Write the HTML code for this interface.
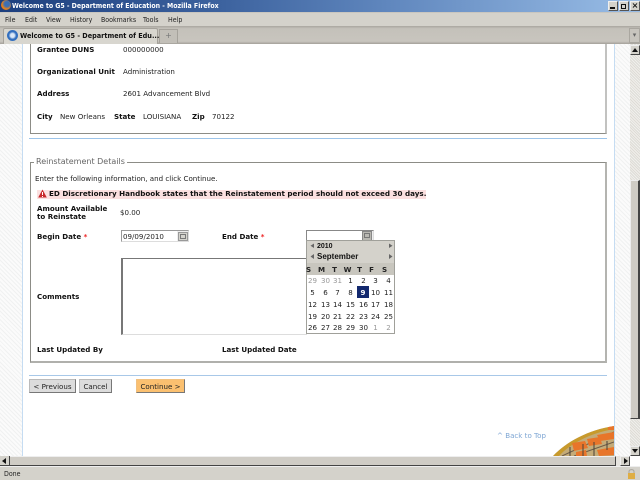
<!DOCTYPE html>
<html><head><meta charset="utf-8"><style>
html,body{margin:0;padding:0;width:640px;height:480px;overflow:hidden;background:#fff}
body{position:relative;font-family:"DejaVu Sans","Liberation Sans",sans-serif;font-size:7.1px;color:#222}
div,span.a{position:absolute;white-space:nowrap;box-sizing:border-box}
.t{line-height:10px;height:10px}
.b{font-weight:bold;color:#111}
.m{font-family:"DejaVu Sans",sans-serif;font-size:7.4px;color:#222;line-height:12px;top:14px;transform:scaleX(.85);transform-origin:0 0}
.r{color:#e22}
.cal{font-size:7.1px;line-height:13px;height:13px;width:13px;text-align:center;color:#222}
.g{color:#999}
.pat{background-color:#f7f7f6;background-image:repeating-linear-gradient(45deg,#f0f1f1 0 1px,#fbfbfb 1px 3px)}
</style></head><body>
<!-- title bar -->
<div style="left:0;top:0;width:640px;height:12px;background:linear-gradient(90deg,#1d3f7e 0,#3d639f 35%,#5f86bd 60%,#99bde6 100%)"></div>
<div style="left:0;top:12px;width:640px;height:14px;background:#d4d2cb"></div>
<div style="left:0;top:12px;width:640px;height:1px;background:#c9c6bf"></div>
<div style="left:1px;top:0;width:10px;height:10px;border-radius:50%;background:radial-gradient(circle at 60% 40%,#3b6fb5 0 30%,#e8841c 60%,#c4500f)"></div>
<div style="left:12px;top:0;height:12px;line-height:11px;font-family:'DejaVu Sans',sans-serif;font-size:7.4px;font-weight:bold;color:#fff;transform:scaleX(.843);transform-origin:0 0">Welcome to G5 - Department of Education - Mozilla Firefox</div>
<div style="left:608px;top:1px;width:10px;height:10px;background:#d4d2cb;border:1px solid #999;border-color:#eee #555 #555 #eee"></div>
<div style="left:610px;top:7px;width:5px;height:2px;background:#111"></div>
<div style="left:619px;top:1px;width:10px;height:10px;background:#d4d2cb;border:1px solid #999;border-color:#eee #555 #555 #eee"></div>
<div style="left:621px;top:4px;width:5px;height:5px;border:1px solid #111"></div>
<div style="left:630px;top:1px;width:10px;height:10px;background:#d4d2cb;border:1px solid #999;border-color:#eee #555 #555 #eee;font-size:8px;line-height:8px;text-align:center;font-weight:bold;color:#111">×</div>
<!-- menu -->
<div class="m" style="left:5px">File</div><div class="m" style="left:25px">Edit</div><div class="m" style="left:46px">View</div><div class="m" style="left:70px">History</div><div class="m" style="left:101px">Bookmarks</div><div class="m" style="left:143px">Tools</div><div class="m" style="left:168px">Help</div>
<!-- tab bar -->
<div style="left:0;top:26px;width:640px;height:18px;background:linear-gradient(#a9a69f,#c4c1ba 15%,#c8c5be 85%,#a3a09a)"></div>
<div style="left:3px;top:28px;width:155px;height:16px;background:#d8d6cf;border:1px solid #a5a29b;border-bottom:0;border-radius:2px 2px 0 0"></div>
<div style="left:7px;top:30px;width:11px;height:11px;border-radius:50%;background:radial-gradient(circle,#dbe8f8 0 25%,#2f6cbd 50%,#3d78c7)"></div>
<div style="left:20px;top:30px;height:12px;line-height:12px;font-family:'DejaVu Sans',sans-serif;font-size:7.4px;color:#111;font-weight:bold;transform:scaleX(.88);transform-origin:0 0">Welcome to G5 - Department of Edu...</div>
<div style="left:159px;top:29px;width:19px;height:14px;background:#c2bfb8;border:1px solid #a5a29b;border-bottom:0;color:#777;text-align:center;line-height:12px;font-size:8px">+</div>
<div style="left:629px;top:28px;width:11px;height:15px;background:#c8c5be;border:1px solid #aaa7a0;color:#666;font-size:7px;line-height:13px;text-align:center">▾</div>
<!-- content backgrounds -->
<div class="pat" style="left:0;top:44px;width:22px;height:412px"></div>
<div style="left:22px;top:44px;width:1px;height:412px;background:#c5dcf2"></div>
<div style="left:614px;top:44px;width:1px;height:412px;background:#c5dcf2"></div>
<div class="pat" style="left:615px;top:44px;width:15px;height:412px"></div>
<!-- panel 1 -->
<div style="left:30px;top:44px;width:577px;height:90px;border:1px solid #8c8c86;border-top:0;border-right:2px solid #c2c2c0;border-left-width:1px"></div>
<div class="t b" style="left:37px;top:45px">Grantee DUNS</div><div class="t" style="left:123px;top:45px">000000000</div>
<div class="t b" style="left:37px;top:67px">Organizational Unit</div><div class="t" style="left:123px;top:67px">Administration</div>
<div class="t b" style="left:37px;top:89px">Address</div><div class="t" style="left:123px;top:89px">2601 Advancement Blvd</div>
<div class="t b" style="left:37px;top:112px">City</div><div class="t" style="left:60px;top:112px">New Orleans</div><div class="t b" style="left:114px;top:112px">State</div><div class="t" style="left:143px;top:112px">LOUISIANA</div><div class="t b" style="left:192px;top:112px">Zip</div><div class="t" style="left:212px;top:112px">70122</div>
<div style="left:29px;top:138px;width:578px;height:1px;background:#9cc4ea"></div>
<!-- fieldset -->
<div style="left:30px;top:162px;width:577px;height:201px;border:1px solid #8c8c86;border-right:2px solid #b4b4b0;border-bottom:2px solid #b0b0ac"></div>
<div class="t" style="left:34px;top:157px;background:#fff;padding:0 2px;font-size:8px;color:#666">Reinstatement Details</div>
<div class="t" style="left:35px;top:174px">Enter the following information, and click Continue.</div>
<div style="left:37px;top:190px;width:389px;height:9px;background:#fbe0e0"></div>
<svg style="position:absolute;left:38px;top:189px" width="9" height="9" viewBox="0 0 9 9"><path d="M4.500 .5L8.800 8.500H.2Z" fill="#c8282a"/><path d="M4.500 3v3M4.500 7v1" stroke="#fff" stroke-width="1"/></svg>
<div class="t b" style="left:49px;top:189px;font-size:7.18px">ED Discretionary Handbook states that the Reinstatement period should not exceed 30 days.</div>
<div class="t b" style="left:37px;top:204px">Amount Available</div><div class="t b" style="left:37px;top:212px">to Reinstate</div>
<div class="t" style="left:120px;top:208px">$0.00</div>
<div class="t b" style="left:37px;top:232px">Begin Date <span class="r">*</span></div>
<div style="left:121px;top:230px;width:68px;height:12px;background:#eee;border:1px solid #999;border-right-color:#ddd;border-bottom-color:#ddd"></div>
<div style="left:122px;top:231px;width:55px;height:10px;background:#fff"></div>
<div class="t" style="left:123px;top:232px">09/09/2010</div>
<div style="left:178px;top:232px;width:10px;height:9px;background:#d4d3cd;border:1px solid #999"></div>
<div style="left:180px;top:234px;width:6px;height:5px;border:1px solid #777"></div>
<div class="t b" style="left:222px;top:232px">End Date <span class="r">*</span></div>
<div style="left:306px;top:230px;width:68px;height:12px;background:#eee;border:1px solid #888;border-right-color:#ddd;border-bottom:0"></div>
<div style="left:307px;top:231px;width:55px;height:10px;background:#fff"></div>
<div style="left:362px;top:231px;width:10px;height:10px;background:#b9b8b2;border:1px solid #888"></div>
<div style="left:364px;top:233px;width:6px;height:5px;border:1px solid #777"></div>
<!-- textarea -->
<div style="left:121px;top:258px;width:186px;height:77px;background:#fff;border-top:1px solid #777;border-left:2px solid #777;border-bottom:1px solid #ddd"></div>
<div class="t b" style="left:37px;top:292px">Comments</div>
<div class="t b" style="left:37px;top:345px">Last Updated By</div>
<div class="t b" style="left:222px;top:345px">Last Updated Date</div>
<!-- calendar -->
<div style="left:306px;top:240px;width:89px;height:94px;background:#fff;border:1px solid #a0a09a"></div>
<div style="left:307px;top:241px;width:87px;height:22px;background:#d4d2cb"></div>
<div style="left:307px;top:263px;width:87px;height:12px;background:#c8c6be"></div>
<div class="t b" style="left:317px;top:242px;font-family:'Liberation Sans',sans-serif;font-size:7px">2010</div>
<div class="t b" style="left:317px;top:252px;font-family:'Liberation Sans',sans-serif;font-size:8px">September</div>
<svg style="position:absolute;left:306px;top:242px" width="89" height="20"><path d="M8 1.500V6L4.500 3.800ZM8 12V17L4.500 14.500ZM83 1.500V6L86.500 3.800ZM83 12V17L86.500 14.500Z" fill="#666"/></svg>
<div class="cal b" style="left:302px;top:263px">S</div><div class="cal b" style="left:315px;top:263px">M</div><div class="cal b" style="left:328px;top:263px">T</div><div class="cal b" style="left:341px;top:263px">W</div><div class="cal b" style="left:353px;top:263px">T</div><div class="cal b" style="left:365px;top:263px">F</div><div class="cal b" style="left:378px;top:263px">S</div>
<div style="left:357px;top:286px;width:12px;height:12px;background:#12286e"></div>
<div class="cal g" style="left:306px;top:274px">29</div><div class="cal g" style="left:319px;top:274px">30</div><div class="cal g" style="left:331px;top:274px">31</div><div class="cal" style="left:344px;top:274px">1</div><div class="cal" style="left:357px;top:274px">2</div><div class="cal" style="left:369px;top:274px">3</div><div class="cal" style="left:382px;top:274px">4</div>
<div class="cal" style="left:306px;top:286px">5</div><div class="cal" style="left:319px;top:286px">6</div><div class="cal" style="left:331px;top:286px">7</div><div class="cal" style="left:344px;top:286px">8</div><div class="cal b" style="left:356.500px;top:286px;color:#fff">9</div><div class="cal" style="left:369px;top:286px">10</div><div class="cal" style="left:382px;top:286px">11</div>
<div class="cal" style="left:306px;top:298px">12</div><div class="cal" style="left:319px;top:298px">13</div><div class="cal" style="left:331px;top:298px">14</div><div class="cal" style="left:344px;top:298px">15</div><div class="cal" style="left:357px;top:298px">16</div><div class="cal" style="left:369px;top:298px">17</div><div class="cal" style="left:382px;top:298px">18</div>
<div class="cal" style="left:306px;top:310px">19</div><div class="cal" style="left:319px;top:310px">20</div><div class="cal" style="left:331px;top:310px">21</div><div class="cal" style="left:344px;top:310px">22</div><div class="cal" style="left:357px;top:310px">23</div><div class="cal" style="left:369px;top:310px">24</div><div class="cal" style="left:382px;top:310px">25</div>
<div class="cal" style="left:306px;top:321px">26</div><div class="cal" style="left:319px;top:321px">27</div><div class="cal" style="left:331px;top:321px">28</div><div class="cal" style="left:344px;top:321px">29</div><div class="cal" style="left:357px;top:321px">30</div><div class="cal g" style="left:369px;top:321px">1</div><div class="cal g" style="left:382px;top:321px">2</div>
<!-- buttons -->
<div style="left:29px;top:375px;width:578px;height:1px;background:#a8c8e8"></div>
<div class="t" style="left:29px;top:379px;width:47px;height:14px;line-height:13px;text-align:center;background:#dcdcdc;border:1px solid #bbb;border-right-color:#777;border-bottom-color:#777">&lt; Previous</div>
<div class="t" style="left:79px;top:379px;width:33px;height:14px;line-height:13px;text-align:center;background:#dcdcdc;border:1px solid #bbb;border-right-color:#777;border-bottom-color:#777">Cancel</div>
<div class="t" style="left:136px;top:379px;width:49px;height:14px;line-height:13px;text-align:center;background:#fbc070;border:1px solid #f0c080;border-right-color:#777;border-bottom-color:#777">Continue &gt;</div>
<!-- back to top -->
<div class="t" style="left:497px;top:431px;color:#7ea6d4">^ Back to Top</div>
<!-- corner image -->
<svg style="position:absolute;left:550px;top:422px" width="64" height="34" viewBox="0 0 64 34"><defs><clipPath id="c"><path d="M3 34C16 20 38 8 64 4V34Z"/></clipPath></defs><g clip-path="url(#c)"><rect width="64" height="34" fill="#c4ab78"/><path d="M3 34C16 20 38 8 64 4V7C40 11 20 22 9 34Z" fill="#c89a2c"/><path d="M12 34L64 10M24 34L64 20" stroke="#6a5a48" stroke-width="1" fill="none"/><path d="M22 21L35 19 38 26 24 29ZM37 17L50 15 52 22 39 24ZM47 13L64 10V17L50 19ZM47 28L64 25V33L49 34ZM26 30L36 28 37 34H26ZM58 4L64 4V8L58 8Z" fill="#e8752a"/><path d="M20 25V34M33 22V34M44 20V34M57 19V28" stroke="#4a4238" stroke-width="1" fill="none"/></g></svg>
<!-- v scrollbar -->
<div style="left:630px;top:44px;width:10px;height:412px;background-color:#e8e6e1;background-image:repeating-linear-gradient(45deg,#dedcd6 0 1px,#f0efec 1px 2px)"></div>
<div style="left:630px;top:45px;width:10px;height:10px;background:#d4d2cb;border:1px solid #eee;border-right-color:#444;border-bottom-color:#444"></div>
<svg style="position:absolute;left:631px;top:47px" width="8" height="6"><path d="M4 1L7 5H1Z" fill="#111"/></svg>
<div style="left:630px;top:180px;width:10px;height:239px;background:#cfccc5;border:1px solid #eee;border-right:2px solid #444;border-bottom:1px solid #444"></div>
<div style="left:630px;top:446px;width:10px;height:10px;background:#d4d2cb;border:1px solid #eee;border-right-color:#444;border-bottom-color:#444"></div>
<svg style="position:absolute;left:631px;top:448px" width="8" height="6"><path d="M1 1H7L4 5Z" fill="#111"/></svg>
<!-- h scrollbar -->
<div style="left:0;top:456px;width:630px;height:10px;background:#e6e4df"></div>
<div style="left:10px;top:456px;width:606px;height:10px;background:#cfccc5;border-top:1px solid #eee;border-bottom:1px solid #444;border-right:1px solid #444"></div>
<div style="left:0;top:456px;width:10px;height:10px;background:#d4d2cb;border-right:1px solid #444;border-bottom:1px solid #444"></div>
<svg style="position:absolute;left:1px;top:458px" width="7" height="7"><path d="M5 0V6L1 3Z" fill="#111"/></svg>
<div style="left:620px;top:456px;width:10px;height:10px;background:#d4d2cb;border:1px solid #eee;border-right-color:#444;border-bottom-color:#444"></div>
<svg style="position:absolute;left:622px;top:458px" width="7" height="7"><path d="M2 0V6L6 3Z" fill="#111"/></svg>
<!-- status -->
<div style="left:0;top:466px;width:640px;height:14px;background:#d4d2cb;border-top:1px solid #eee"></div>
<div style="left:4px;top:468px;font-family:'DejaVu Sans',sans-serif;font-size:7.4px;line-height:11px;color:#222;transform:scaleX(.85);transform-origin:0 0">Done</div>
<svg style="position:absolute;left:626px;top:468px" width="11" height="11"><path d="M3 5V3.500C3 1 8 1 8 3.500V5" fill="none" stroke="#a8a49c" stroke-width="1"/><rect x="2" y="5" width="7" height="6" fill="#dfae45"/></svg>
</body></html>
